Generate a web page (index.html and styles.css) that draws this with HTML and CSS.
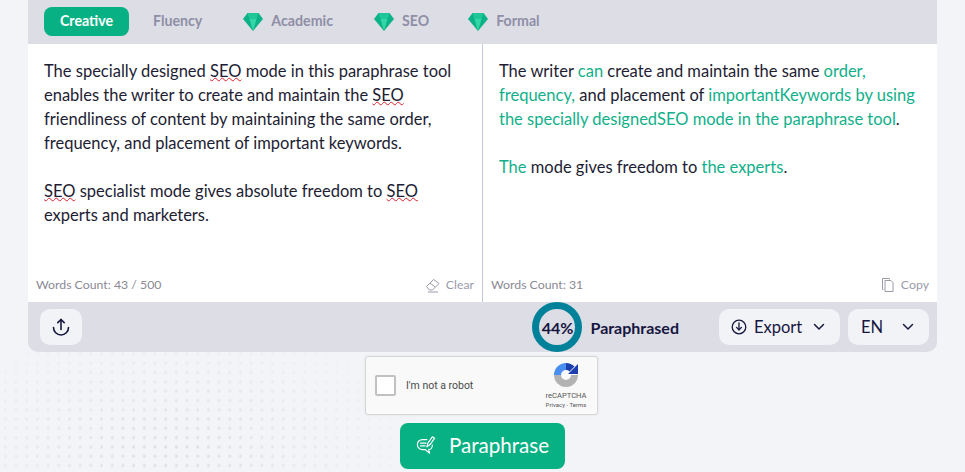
FILE: index.html
```html
<!DOCTYPE html>
<html>
<head lang="en">
    <meta charset="UTF-8">
    <title>Paraphrase</title>
    <link rel="stylesheet" href="styles.css">
</head>
<body>
<div class="dots"></div>
<div class="tool">
    <div class="modes">
        <a class="mode mode-on">Creative</a>
        <a class="mode">Fluency</a>
        <a class="mode"><svg class="gem" viewBox="0 0 20 18"><path d="M4.500 0h11L20 6l-10 12L0 6z" fill="#0cb287"/><path d="M6.500 6h7L10 18z" fill="#33d6a6"/><path d="M4.500 0h11l-2 6h-7z" fill="#1fc698"/></svg>Academic</a>
        <a class="mode mode-seo"><svg class="gem" viewBox="0 0 20 18"><path d="M4.500 0h11L20 6l-10 12L0 6z" fill="#0cb287"/><path d="M6.500 6h7L10 18z" fill="#33d6a6"/><path d="M4.500 0h11l-2 6h-7z" fill="#1fc698"/></svg>SEO</a>
        <a class="mode"><svg class="gem" viewBox="0 0 20 18"><path d="M4.500 0h11L20 6l-10 12L0 6z" fill="#0cb287"/><path d="M6.500 6h7L10 18z" fill="#33d6a6"/><path d="M4.500 0h11l-2 6h-7z" fill="#1fc698"/></svg>Formal</a>
    </div>
    <div class="editors">
        <div class="pane pane-left">
            <div class="text">
                <p>The specially designed <u>SEO</u> mode in this paraphrase tool enables the writer to create and maintain the <u>SEO</u> friendliness of content by maintaining the same order, frequency, and placement of important keywords.</p>
                <p><u>SEO</u> specialist mode gives absolute freedom to <u>SEO</u> experts and marketers.</p>
            </div>
            <div class="count">
                <span>Words Count: 43 / 500</span>
                <span class="action">
                    <svg class="action-icon" viewBox="0 0 16 16" fill="none" stroke="#9a9aab" stroke-width="1"><path d="M1.500 9.500l7-7 5.500 4-6.500 6.500h-3z"/><path d="M5 6l5 4"/><path d="M3 15h10"/></svg>
                    Clear
                </span>
            </div>
        </div>
        <div class="pane">
            <div class="text">
                <p>The writer <b>can</b> create and maintain the same <b>order, frequency,</b> and placement of <b>importantKeywords by using the specially designedSEO mode in the paraphrase tool</b>.</p>
                <p><b>The</b> mode gives freedom to <b>the experts</b>.</p>
            </div>
            <div class="count">
                <span>Words Count: 31</span>
                <span class="action">
                    <svg class="action-icon" viewBox="0 0 16 16" fill="none" stroke="#9a9aab" stroke-width="1"><path d="M3.500 12.500h-1v-11h7v1"/><path d="M5 3.500h6l2 2v9H5z"/></svg>
                    Copy
                </span>
            </div>
        </div>
    </div>
    <div class="bottom">
        <button class="btn btn-upload">
            <svg width="20" height="20" viewBox="0 0 20 20" fill="none" stroke="#16163f" stroke-width="1.600" stroke-linecap="round"><path d="M10 2.500v10"/><path d="M6.800 5.600L10 2.500l3.200 3.100"/><path d="M2.500 10.500a7.500 7.500 0 0 0 15 0"/></svg>
        </button>
        <div class="result">
            <div class="ring">44%</div>
            <span class="result-label">Paraphrased</span>
        </div>
        <button class="btn btn-export">
            <svg width="16" height="16" viewBox="0 0 16 16" fill="none" stroke="#16163f" stroke-width="1.300" stroke-linecap="round"><circle cx="8" cy="8" r="6.800"/><path d="M8 3.800v7"/><path d="M5.500 8.400L8 10.800l2.500-2.400"/></svg>
            <span>Export</span>
            <svg class="chev" viewBox="0 0 12 8" fill="none" stroke="#16163f" stroke-width="1.500" stroke-linecap="round"><path d="M1.500 1.500L6 6l4.500-4.500"/></svg>
        </button>
        <button class="btn btn-lang">
            <span>EN</span>
            <svg class="chev" viewBox="0 0 12 8" fill="none" stroke="#16163f" stroke-width="1.500" stroke-linecap="round"><path d="M1.500 1.500L6 6l4.500-4.500"/></svg>
        </button>
    </div>
</div>
<div class="submit">
    <div class="captcha">
        <span class="captcha-box"></span>
        <span class="captcha-text">I'm not a robot</span>
        <div class="captcha-brand">
            <svg width="24" height="24" viewBox="0 0 24 24" fill="none" stroke-width="7"><path d="M20.500 12a8.500 8.500 0 0 1-17 0" stroke="#b3b3b3"/><path d="M3.500 12a8.500 8.500 0 0 1 8.500-8.500" stroke="#4a8ff0"/><path d="M12 3.500a8.500 8.500 0 0 1 6 2.500" stroke="#1c3fae"/><path d="M14 11h10V1z" fill="#1c3fae" stroke="none"/></svg>
            <span class="captcha-name">reCAPTCHA</span>
            <span class="captcha-links">Privacy - Terms</span>
        </div>
    </div>
    <button class="go">
        <svg width="20" height="20" viewBox="0 0 22 22" fill="none" stroke="#fff" stroke-width="1.300" stroke-linecap="round" stroke-linejoin="round"><path d="M12 5H7a5.500 5.500 0 0 0 0 11h3l5 4-1-4c2 0 4-2 4-5"/><path d="M5 9h6M5 12h5"/><path d="M12 13l1-4 5-7 2.500 1.500-5 7z"/></svg>
        Paraphrase
    </button>
</div>
</body>
</html>
```

FILE: styles.css
```css
html, body {
    margin: 0;
    height: 472px;
    overflow: hidden;
}
body {
    position: relative;
    background: #f3f4f7;
    font-family: "Lato", "Liberation Sans", sans-serif;
    color: #16163f;
}
.dots {
    position: absolute;
    left: 0;
    width: 420px;
    top: 340px;
    bottom: 0;
    background-image: radial-gradient(circle, #dddee3 1.300px, transparent 1.800px);
    background-size: 10.700px 9.300px;
    -webkit-mask-image: radial-gradient(ellipse 260px 140px at 170px 110px, #000 0, transparent 100%);
    mask-image: radial-gradient(ellipse 260px 140px at 170px 110px, #000 0, transparent 100%);
}
.tool {
    position: relative;
    margin: 0 28px;
    border-radius: 0 0 10px 10px;
}

.modes {
    display: flex;
    align-items: center;
    box-sizing: border-box;
    height: 44px;
    padding: 0 0 1px 16px;
    background: #dddde6;
    font-size: 14.200px;
    font-weight: 700;
    color: #8f8fa6;
}
.mode {
    display: flex;
    align-items: center;
    box-sizing: border-box;
    height: 29px;
    padding-bottom: 2px;
    margin-right: 41px;
}
.mode-on {
    justify-content: center;
    width: 85px;
    margin-right: 24px;
    border-radius: 8px;
    background: #08b183;
    color: #fff;
}
.mode-seo {
    margin-right: 39px;
}
.gem {
    width: 20px;
    height: 18px;
    margin: 2px 8px 0 0;
}

.editors {
    display: flex;
    height: 258px;
    background: #fff;
}
.pane {
    display: flex;
    flex: 1;
    flex-direction: column;
    justify-content: space-between;
    padding: 15px 8px 7px;
}
.pane-left {
    border-right: 1px solid #c6c8d8;
}
.text {
    padding: 0 8px;
    font-size: 16.500px;
    line-height: 24px;
    color: #1d1d33;
}
.pane-left .text {
    padding-right: 16px;
}
.text p {
    margin: 0 0 24px;
}
.text u {
    text-decoration: underline wavy #e0202a 0.700px;
    text-underline-offset: 0;
}
.text b {
    font-weight: 400;
    color: #11b08a;
}
.count {
    display: flex;
    justify-content: space-between;
    align-items: center;
    font-size: 12.300px;
    line-height: 20px;
    color: #8a8a94;
}
.action {
    display: flex;
    align-items: center;
    color: #9a9aab;
}
.action-icon {
    width: 16px;
    height: 16px;
    margin-right: 5px;
}

.bottom {
    display: flex;
    align-items: center;
    height: 50px;
    padding: 0 8px 0 12px;
    border-radius: 0 0 10px 10px;
    background: #dddde6;
}
.btn {
    display: flex;
    align-items: center;
    height: 36px;
    border: 0;
    border-radius: 10px;
    background: #f2f3f7;
    font-family: inherit;
    font-size: 16.500px;
    color: #16163f;
}
.btn span {
    padding-bottom: 1px;
}
.btn-upload {
    justify-content: center;
    width: 42px;
}
.result {
    display: flex;
    align-items: center;
    margin-left: auto;
    margin-right: 40px;
}
.ring {
    display: flex;
    align-items: center;
    justify-content: center;
    box-sizing: border-box;
    width: 50px;
    height: 50px;
    border: 7px solid #00819a;
    border-radius: 50%;
    font-size: 16px;
    font-weight: 700;
}
.result-label {
    margin-left: 8px;
    font-size: 16px;
    font-weight: 700;
}
.btn-export {
    width: 121px;
    padding: 0 15px 0 12px;
    margin-right: 8px;
}
.btn-export span {
    margin-left: 7px;
}
.btn-lang {
    justify-content: space-between;
    width: 81px;
    padding: 0 15px 0 13px;
}
.chev {
    width: 12px;
    height: 8px;
    margin-left: auto;
}

.submit {
    position: relative;
    display: flex;
    flex-direction: column;
    align-items: center;
    margin-top: 4px;
}
.captcha {
    display: flex;
    align-items: center;
    box-sizing: border-box;
    width: 233px;
    height: 59px;
    margin-right: 2px;
    padding: 0 9px;
    border: 1px solid #d6d6d6;
    border-radius: 3px;
    background: #f9f9f9;
    box-shadow: 0 0 3px rgba(0, 0, 0, 0.08);
    font-family: "Roboto", sans-serif;
}
.captcha-box {
    box-sizing: border-box;
    width: 21px;
    height: 21px;
    border: 2px solid #c1c1c1;
    border-radius: 2px;
    background: #fff;
}
.captcha-text {
    margin-left: 10px;
    font-size: 10.500px;
    color: #4a4a4a;
}
.captcha-brand {
    display: flex;
    flex-direction: column;
    align-items: center;
    margin-left: auto;
    width: 44px;
}
.captcha-name {
    margin-top: 3px;
    font-size: 7.600px;
    line-height: 11px;
    color: #555;
}
.captcha-links {
    font-size: 6px;
    line-height: 8px;
    color: #555;
    white-space: nowrap;
}
.go {
    display: flex;
    align-items: center;
    justify-content: center;
    gap: 13px;
    width: 165px;
    height: 46px;
    margin-top: 8px;
    padding: 0 0 2px;
    border: 0;
    border-radius: 8px;
    background: #08b183;
    font-family: inherit;
    font-size: 20.600px;
    color: #fff;
}
```
